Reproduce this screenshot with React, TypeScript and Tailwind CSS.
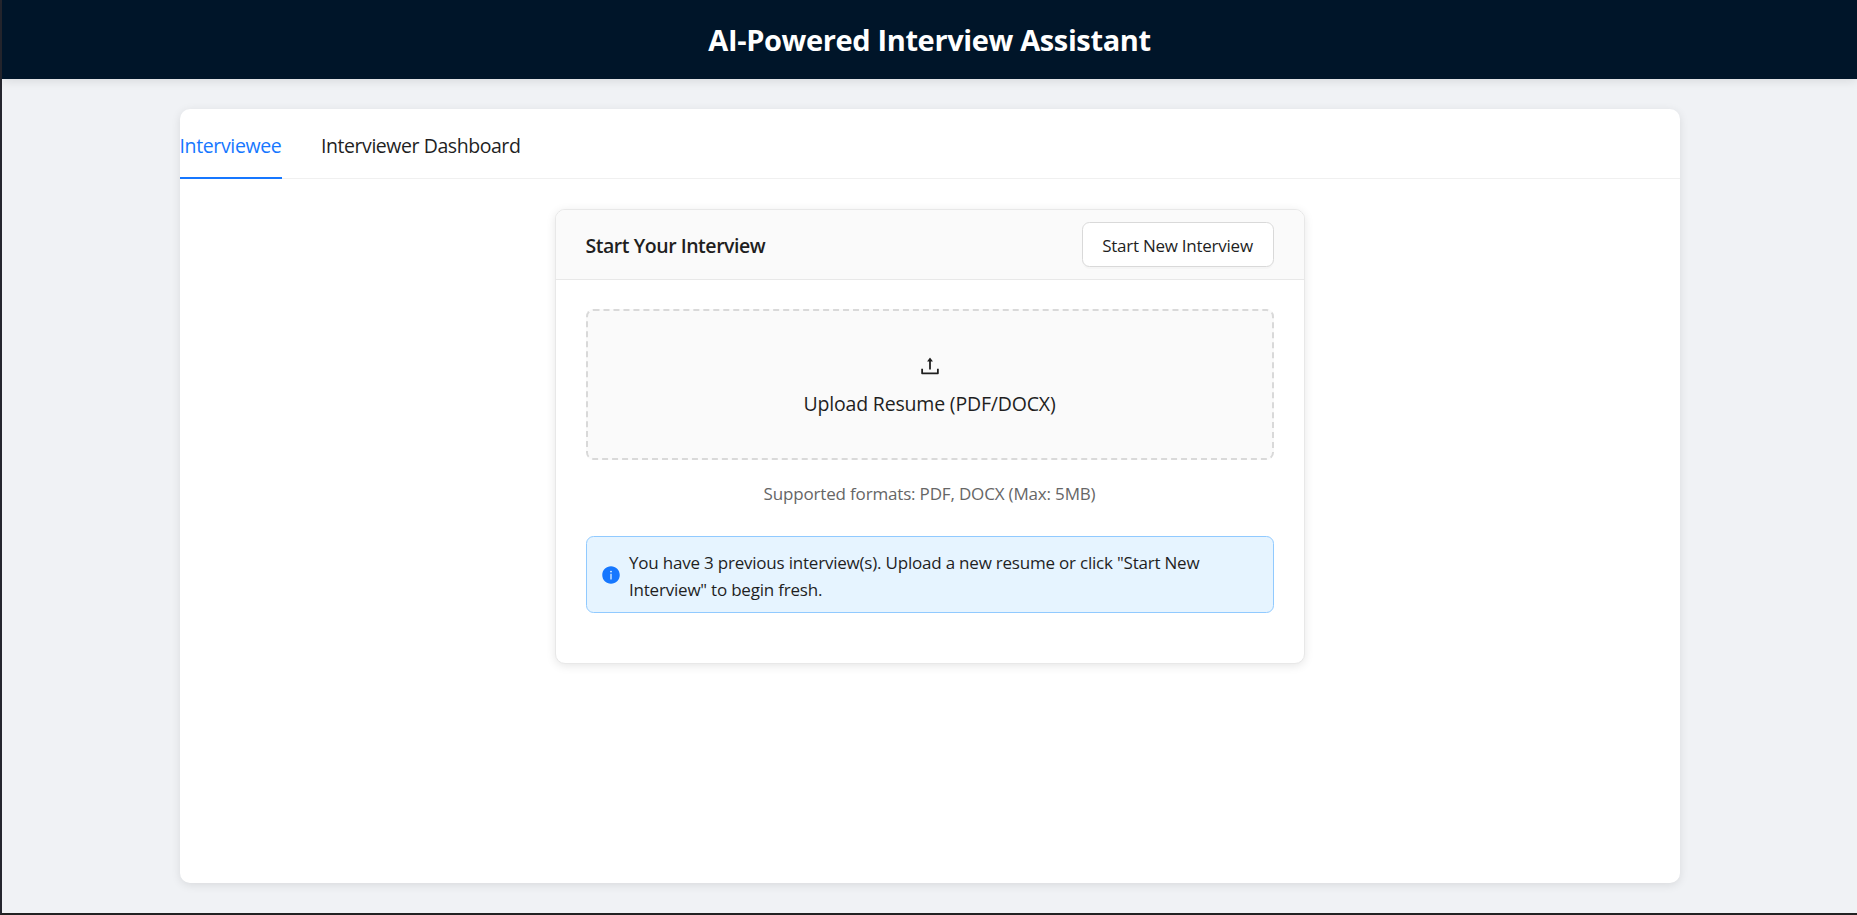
import { AiFillInfoCircle, AiOutlineUpload } from "react-icons/ai";

function Tabs() {
  return (
    <nav className="flex h-[70px] gap-[39.5px] border-b border-[#f0f0f0] text-[19.5px] leading-[30px]">
      <button className="-mb-px w-[102px] border-b-2 border-[#1677ff] pt-1.5 text-left tracking-[-0.36px] whitespace-nowrap text-[#1677ff]">
        Interviewee
      </button>
      <button className="pt-1.5 pb-px tracking-[-0.44px] whitespace-nowrap">Interviewer Dashboard</button>
    </nav>
  );
}

function UploadCard() {
  return (
    <section className="mx-auto mt-[30px] h-[455px] w-[750px] overflow-hidden rounded-[10px] border border-[#e8e8e8] bg-white shadow-[0_2px_10px_rgba(0,0,0,0.1)]">
      <header className="flex h-[70px] items-center justify-between border-b border-[#e8e8e8] bg-[#fafafa] px-[30px]">
        <h2 className="pt-[3px] text-[19.5px] font-semibold tracking-[-0.46px]">Start Your Interview</h2>
        <button className="h-[45px] w-[192px] rounded-[7.5px] border border-[#d9d9d9] bg-white pt-0.5 text-[17px] tracking-[-0.25px] shadow-[0_2px_0_rgba(0,0,0,0.02)]">
          Start New Interview
        </button>
      </header>
      <div className="flex flex-col px-[30px] pt-[29px]">
        <div className="flex h-[151px] flex-col items-center justify-center rounded-[7.5px] border-2 border-dashed border-[#d9d9d9] bg-[#fafafa]">
          <AiOutlineUpload className="mt-[3px] size-6" />
          <p className="mt-[11px] text-[19.5px] leading-[30px] tracking-[-0.18px]">Upload Resume (PDF/DOCX)</p>
        </div>
        <p className="mt-5 text-center text-[17px] leading-[28px] tracking-[-0.17px] text-[#666666]">
          Supported formats: PDF, DOCX (Max: 5MB)
        </p>
        <div className="mt-[28px] flex h-[77px] items-center rounded-[7.5px] border border-[#91caff] bg-[#e6f4ff] pl-[14px]">
          <AiFillInfoCircle className="size-5 shrink-0 text-[#1677ff]" />
          <p className="ml-[8.5px] pt-[3px] text-[17px] leading-[27px] tracking-[-0.21px]">
            You have 3 previous interview(s). Upload a new resume or click "Start New
            <br />
            Interview" to begin fresh.
          </p>
        </div>
      </div>
    </section>
  );
}

export default function App() {
  return (
    <div className="flex h-[915px] w-full flex-col border-b-2 border-l-2 border-b-[#222222] border-l-[#25262e] bg-[#f0f2f5] font-['Open_Sans','Noto_Sans',sans-serif] text-[#1f1f1f]">
      <header className="flex h-[79px] shrink-0 items-center justify-center bg-[#001529] shadow-[0_2px_10px_rgba(0,0,0,0.1)]">
        <h1 className="text-[29px] font-bold tracking-[-0.37px] text-white">AI-Powered Interview Assistant</h1>
      </header>
      <main className="mx-auto mt-[30px] h-[774px] w-[1500px] rounded-[10px] bg-white shadow-[0_2px_10px_rgba(0,0,0,0.1)]">
        <Tabs />
        <UploadCard />
      </main>
    </div>
  );
}
